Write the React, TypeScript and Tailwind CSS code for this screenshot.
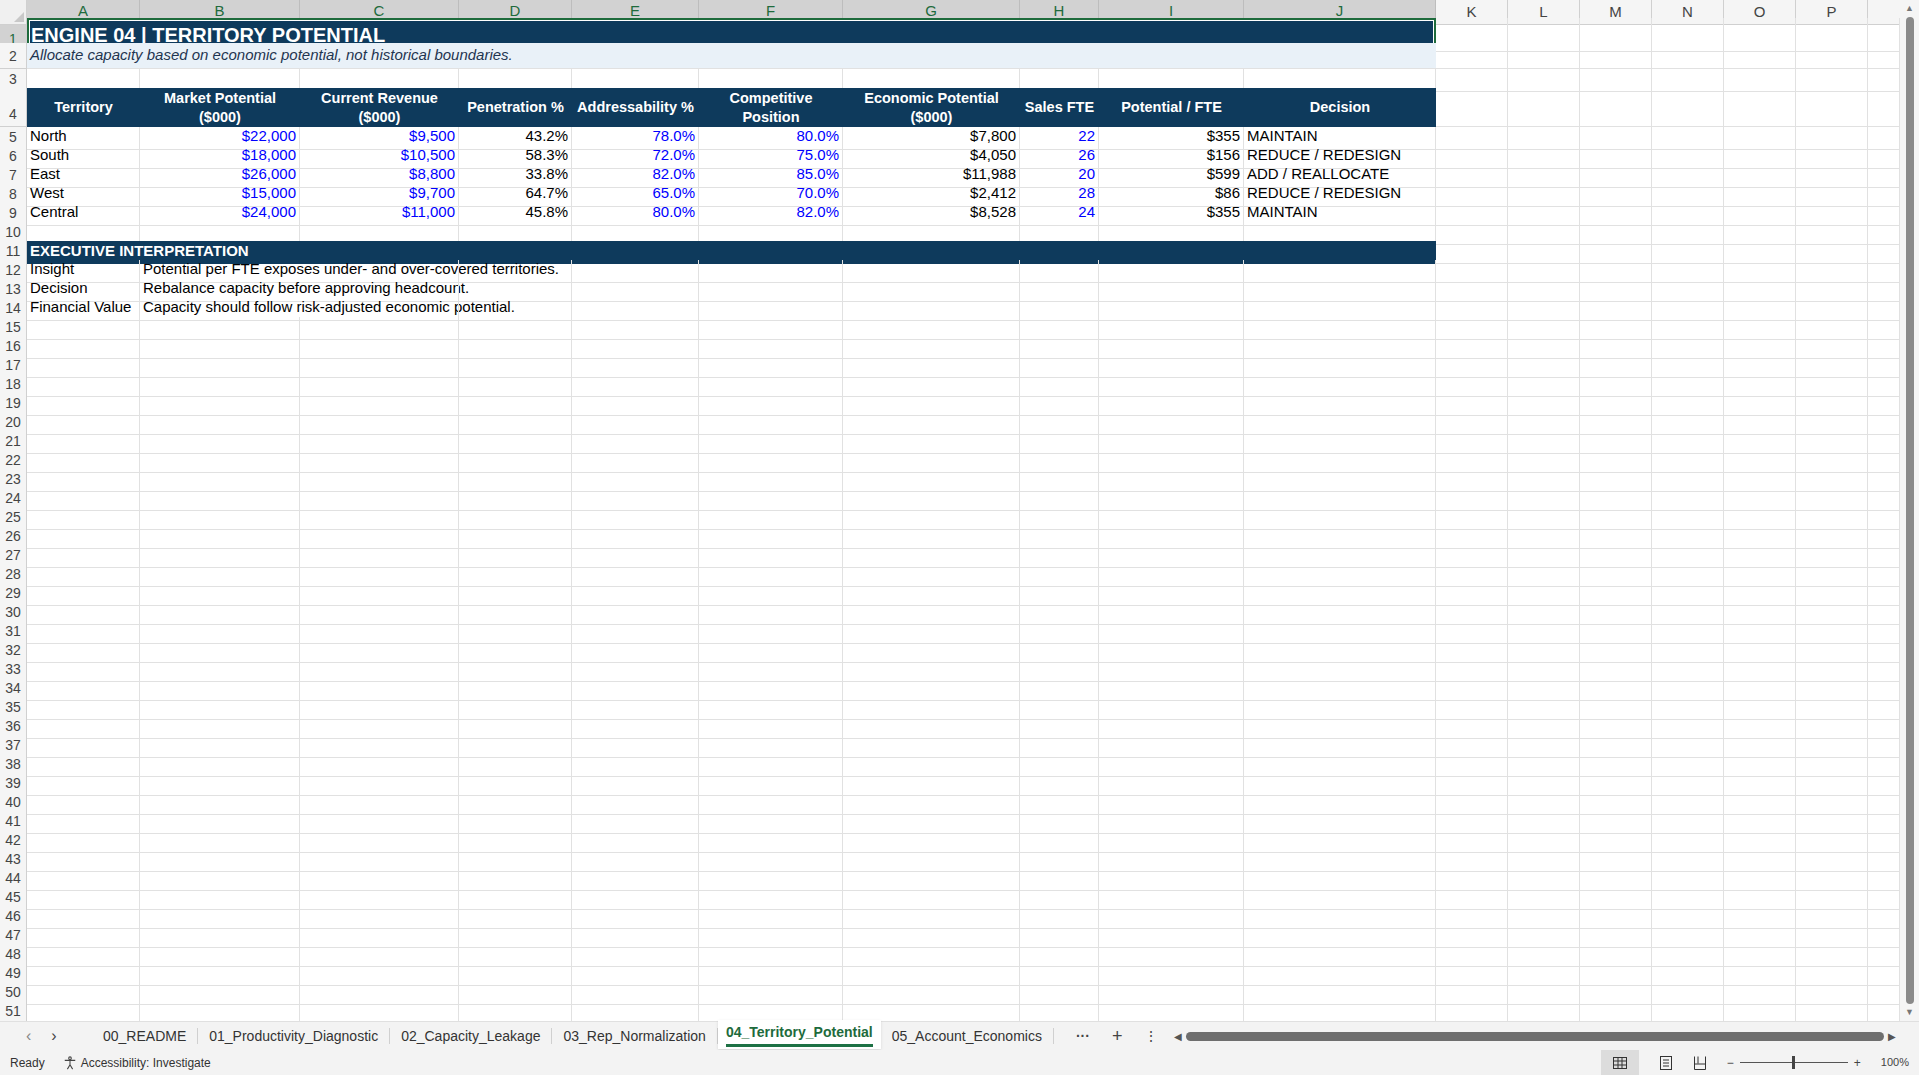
import React from "react";

const cols = ["A","B","C","D","E","F","G","H","I","J","K","L","M","N","O","P"];
const GRID = "grid grid-cols-[27px_113px_160px_159px_113px_127px_144px_177px_79px_145px_192px_72px_72px_72px_72px_72px_72px_1fr]";
const cb = "border-r border-b border-[#e1e1e1]";

const data = [
  ["North","$22,000","$9,500","43.2%","78.0%","80.0%","$7,800","22","$355","MAINTAIN"],
  ["South","$18,000","$10,500","58.3%","72.0%","75.0%","$4,050","26","$156","REDUCE / REDESIGN"],
  ["East","$26,000","$8,800","33.8%","82.0%","85.0%","$11,988","20","$599","ADD / REALLOCATE"],
  ["West","$15,000","$9,700","64.7%","65.0%","70.0%","$2,412","28","$86","REDUCE / REDESIGN"],
  ["Central","$24,000","$11,000","45.8%","80.0%","82.0%","$8,528","24","$355","MAINTAIN"],
];
const blue = [1,2,4,5,7];
const heads = [["Territory"],["Market Potential","($000)"],["Current Revenue","($000)"],["Penetration %"],["Addressability %"],["Competitive","Position"],["Economic Potential","($000)"],["Sales FTE"],["Potential / FTE"],["Decision"]];

function RowNum({ n, sel }: { n: number; sel?: boolean }) {
  return (
    <div className={`flex items-end justify-center pb-[1px] text-[14px] border-r border-b border-[#d0d0d0] ${sel ? "bg-[#d2d2d2] text-[#1e6b3c]" : "bg-[#f5f5f5] text-[#444]"}`}>{n}</div>
  );
}
function Empty({ n }: { n: number }) {
  return <>{Array.from({ length: n }).map((_, i) => <div key={i} className={cb} />)}</>;
}

export default function App() {
  const rows: React.ReactNode[] = [];
  for (let r = 15; r <= 51; r++) {
    rows.push(
      <div key={r} className={`${GRID} h-[19px]`}>
        <RowNum n={r} />
        <Empty n={17} />
      </div>
    );
  }
  const exec = [["Insight","Potential per FTE exposes under- and over-covered territories."],["Decision","Rebalance capacity before approving headcount."],["Financial Value","Capacity should follow risk-adjusted economic potential."]];
  return (
    <div className="w-[1919px] h-[1075px] overflow-hidden bg-white flex flex-col text-black" style={{ fontFamily: '"Liberation Sans", Arial, sans-serif' }}>
      <div className="flex h-[1021px]">
        <div className="w-[1900px] flex flex-col">
          {/* column headers */}
          <div className={`${GRID} h-[18px]`}>
            <div className="bg-[#f0f0f0] border-r border-b border-[#d0d0d0] relative">
              <div className="absolute right-[2px] bottom-[2px] w-0 h-0 border-l-[10px] border-l-transparent border-b-[10px] border-b-[#c8c8c8]" />
            </div>
            {cols.map((c, i) => (
              <div key={c} className={`flex items-center justify-center text-[15px] border-r border-b ${i < 10 ? "bg-[#d2d2d2] text-[#1e6b3c] border-[#bdbdbd] border-b-[#1e6b3c] border-b-2" : "bg-[#f5f5f5] text-[#444] border-[#d0d0d0]"}`}>{c}</div>
            ))}
            <div className="bg-[#f5f5f5] border-b border-[#d0d0d0]" />
          </div>
          {/* row 1 */}
          <div className={`${GRID} h-[25px]`}>
            <RowNum n={1} sel />
            <div className="col-span-10 bg-[#0e3a5c] border-2 border-[#1e6b3c] flex items-center px-[2px] text-white font-bold text-[20px] shadow-[inset_0_0_0_1px_white]">ENGINE 04 | TERRITORY POTENTIAL</div>
            <Empty n={7} />
          </div>
          {/* row 2 */}
          <div className={`${GRID} h-[26px]`}>
            <RowNum n={2} />
            <div className="col-span-10 bg-[#e9f1f8] flex items-center px-[3px] italic text-[15px] text-[#1f3550] border-b border-[#e1e1e1]">Allocate capacity based on economic potential, not historical boundaries.</div>
            <Empty n={7} />
          </div>
          <div className={`${GRID} h-[19px]`}><RowNum n={3} /><Empty n={17} /></div>
          {/* row 4 */}
          <div className={`${GRID} h-[39px]`}>
            <RowNum n={4} />
            {heads.map((h, i) => (
              <div key={i} className="bg-[#0e3a5c] text-white font-bold text-[14.5px] leading-[19px] flex flex-col items-center justify-center text-center">
                {h.map((l, j) => <div key={j}>{l}</div>)}
              </div>
            ))}
            <Empty n={7} />
          </div>
          {data.map((d, ri) => (
            <div key={ri} className={`${GRID} h-[19px]`}>
              <RowNum n={ri + 5} />
              {d.map((v, ci) => (
                <div key={ci} className={`${cb} text-[15px] leading-[18px] px-[3px] whitespace-nowrap ${ci === 0 || ci === 9 ? "text-left" : "text-right"} ${blue.includes(ci) ? "text-[#0000ff]" : ""}`}>{v}</div>
              ))}
              <Empty n={7} />
            </div>
          ))}
          <div className={`${GRID} h-[19px]`}><RowNum n={10} /><Empty n={17} /></div>
          <div className={`${GRID} h-[19px]`}>
            <RowNum n={11} />
            <div className="col-span-10 bg-[#0e3a5c] text-white font-bold text-[15px] leading-[19px] px-[3px]">EXECUTIVE INTERPRETATION</div>
            <Empty n={7} />
          </div>
          {exec.map((e, i) => (
            <div key={i} className={`${GRID} h-[19px]`}>
              <RowNum n={12 + i} />
              <div className={`${cb} text-[15px] leading-[18px] px-[3px] whitespace-nowrap`}>{e[0]}</div>
              <div className="border-b border-[#e1e1e1] text-[15px] leading-[18px] px-[3px] whitespace-nowrap overflow-visible">{e[1]}</div>
              <div className="border-r border-b border-[#e1e1e1]" />
              <Empty n={14} />
            </div>
          ))}
          {rows}
        </div>
        {/* vertical scrollbar */}
        <div className="w-[19px] bg-[#f5f5f5] flex flex-col items-center py-[4px] gap-[4px]">
          <div className="text-[9px] text-[#777] leading-none">▲</div>
          <div className="w-[8px] flex-1 bg-[#8a8a8a] rounded-full" />
          <div className="text-[9px] text-[#777] leading-none">▼</div>
        </div>
      </div>
      {/* tab bar */}
      <div className="h-[29px] bg-[#f3f3f3] flex items-center text-[14px] text-[#333] border-t border-[#e0e0e0]">
        <div className="w-[92px] flex items-center gap-[20px] pl-[26px] text-[#888] text-[16px]"><span>‹</span><span className="text-[#444]">›</span></div>
        <div className="flex items-center h-full">
          {["00_README","01_Productivity_Diagnostic","02_Capacity_Leakage","03_Rep_Normalization","04_Territory_Potential","05_Account_Economics"].map((t) => (
            t === "04_Territory_Potential" ? (
              <div key={t} className="h-[29px] -mt-[3px] bg-white px-[8px] flex flex-col items-center justify-center shadow-sm">
                <span className="text-[#1e6b3c] font-semibold">{t}</span>
                <div className="h-[3px] w-full bg-[#1e7145] mt-[1px]" />
              </div>
            ) : (
              <div key={t} className="px-[11px] border-r border-[#d0d0d0] leading-[16px]">{t}</div>
            )
          ))}
          <div className="flex items-center gap-[22px] pl-[22px] text-[#444]"><span className="font-bold">···</span><span className="text-[18px]">+</span><span>⋮</span></div>
        </div>
        <div className="ml-[16px] flex items-center gap-[4px] w-[722px]">
          <span className="text-[10px] text-[#555]">◀</span>
          <div className="flex-1 h-[9px] bg-[#6e6e6e] rounded-full" />
          <span className="text-[10px] text-[#555]">▶</span>
        </div>
      </div>
      {/* status bar */}
      <div className="h-[25px] bg-[#f3f3f3] flex items-center text-[12px] text-[#333] px-[10px]">
        <span>Ready</span>
        <span className="ml-[18px] flex items-center gap-[4px]">
          <svg width="14" height="14" viewBox="0 0 16 16" fill="none" stroke="#444" strokeWidth="1.2"><circle cx="8" cy="2.5" r="1.5"/><path d="M2 5h12M8 5v5l-3 5M8 10l3 5"/></svg>
          Accessibility: Investigate
        </span>
        <div className="ml-auto flex items-center h-full gap-[20px] text-[#444]">
          <div className="h-full w-[38px] bg-[#dcdcdc] flex items-center justify-center">
            <svg width="14" height="12" viewBox="0 0 14 12" fill="none" stroke="#333"><rect x="0.5" y="0.5" width="13" height="11"/><path d="M0.5 4h13M0.5 8h13M5 0.5v11M9 0.5v11"/></svg>
          </div>
          <svg width="14" height="14" viewBox="0 0 14 14" fill="none" stroke="#333"><rect x="1.5" y="0.5" width="11" height="13"/><path d="M4 4h6M4 7h6M4 10h6"/></svg>
          <svg width="14" height="14" viewBox="0 0 14 14" fill="none" stroke="#333"><path d="M1.5 0.5v13h11V0.5M1.5 8h11M5 0.5v7"/></svg>
          <div className="flex items-center gap-[6px]">
            <span>−</span>
            <div className="relative w-[108px] h-[1px] bg-[#555]"><div className="absolute left-[52px] -top-[6px] w-[3px] h-[13px] bg-[#444]" /></div>
            <span>+</span>
          </div>
          <span className="text-[11px]">100%</span>
        </div>
      </div>
    </div>
  );
}
